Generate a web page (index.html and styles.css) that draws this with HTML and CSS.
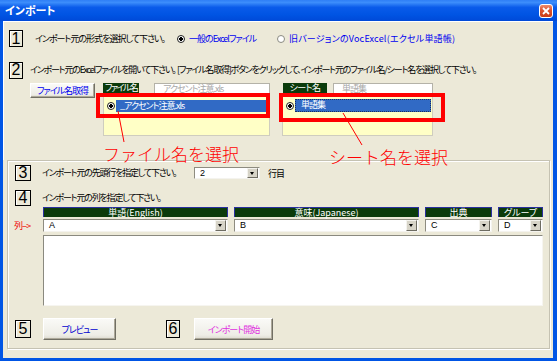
FILE: index.html
```html
<!DOCTYPE html>
<html lang="ja">
<head>
    <meta charset="UTF-8">
    <title>インポート</title>
    <link rel="stylesheet" href="styles.css">
</head>
<body>

    <div class="window">
        <div class="titlebar">
            <span class="title">インポート</span>
            <span class="close">
                <svg width="8" height="8" viewBox="0 0 8 8"><path d="M1 1L7 7M7 1L1 7" stroke="#fff" stroke-width="1.8"/></svg>
            </span>
        </div>

        <div class="client">
            <div class="upper">
                <div class="row">
                    <span class="num">1</span>
                    <span class="prompt p1">インポート元の形式を選択して下さい。</span>
                    <span class="option opt1"><span class="radio on"></span>一般のExcelファイル</span>
                    <span class="option opt2"><span class="radio"></span>旧バージョンのVocExcel(エクセル単語帳)</span>
                </div>

                <div class="row row2">
                    <span class="num">2</span>
                    <span class="prompt p2">インポート元のExcelファイルを開いて下さい。&nbsp;&nbsp;[ファイル名取得]ボタンをクリックして、インポート元のファイル名/シート名を選択して下さい。</span>
                </div>

                <div class="files">
                    <button class="btn btn-get">ファイル名取得</button>

                    <div class="file-group">
                        <div class="group-head">
                            <span class="tag">ファイル名</span>
                            <span class="field">アクセント注意.xls</span>
                        </div>
                        <div class="list">
                            <div class="item">
                                <span class="radio on"></span>
                                <span class="pick">_アクセント注意.xls</span>
                            </div>
                        </div>
                    </div>

                    <div class="sheet-group">
                        <div class="group-head">
                            <span class="tag tag-sheet">シート名</span>
                            <span class="field field-sheet">単語集</span>
                        </div>
                        <div class="list">
                            <div class="item item-sheet">
                                <span class="radio on"></span>
                                <span class="pick focus">単語集</span>
                            </div>
                        </div>
                    </div>
                </div>
            </div>

            <div class="frame">
                <div class="row">
                    <span class="num n3">3</span>
                    <span class="prompt p3">インポート元の先頭行を指定して下さい。</span>
                    <span class="combo combo-row"><span class="value">2</span><span class="drop"></span></span>
                    <span class="unit">行目</span>
                </div>

                <div class="row row4">
                    <span class="num n3">4</span>
                    <span class="prompt p4">インポート元の列を指定して下さい。</span>
                </div>

                <div class="columns">
                    <span class="head">単語(English)</span>
                    <span class="head">意味(Japanese)</span>
                    <span class="head">出典</span>
                    <span class="head">グループ</span>

                    <span class="col-label">列--&gt;</span>
                    <span class="combo"><span class="value">A</span><span class="drop"></span></span>
                    <span class="combo"><span class="value">B</span><span class="drop"></span></span>
                    <span class="combo"><span class="value">C</span><span class="drop"></span></span>
                    <span class="combo"><span class="value">D</span><span class="drop"></span></span>

                    <div class="preview"></div>
                </div>

                <div class="row actions">
                    <span class="num n5">5</span>
                    <button class="btn btn-preview">プレビュー</button>
                    <span class="num n6">6</span>
                    <button class="btn btn-import">インポート開始</button>
                </div>
            </div>
        </div>

        <!-- annotations drawn over the dialog -->
        <div class="mark mark-file"></div>
        <div class="mark mark-sheet"></div>
        <svg class="leaders" width="557" height="361">
            <line x1="118" y1="111" x2="124" y2="142" stroke="#f00" stroke-width="1"/>
            <line x1="343" y1="113" x2="362" y2="145" stroke="#f00" stroke-width="1"/>
        </svg>
        <div class="note note-file">ファイル名を選択</div>
        <div class="note note-sheet">シート名を選択</div>
    </div>

</body>
</html>
```

FILE: styles.css
```css
* {
    margin: 0;
    padding: 0;
    box-sizing: border-box;
}

body {
    width: 557px;
    height: 361px;
    overflow: hidden;
    font-family: "Noto Sans CJK JP", "Noto Sans", sans-serif;
    font-size: 9px;
    font-feature-settings: "palt";
    letter-spacing: -1px;
    color: #000;
    background: #ECE9D8;
}

.window {
    position: relative;
    width: 557px;
    height: 361px;
    display: flex;
    flex-direction: column;
}

.titlebar {
    height: 21px;
    flex: none;
    display: flex;
    align-items: center;
    justify-content: space-between;
    padding: 0 4px 0 5px;
    background: linear-gradient(#2F7FF6 0%, #3C8DFB 12%, #0A5BEA 35%, #0054E3 70%, #0049D8 100%);
}

.title {
    color: #fff;
    font-weight: bold;
    font-size: 11px;
    letter-spacing: 0;
    line-height: 1;
}

.close {
    width: 14px;
    height: 14px;
    display: flex;
    align-items: center;
    justify-content: center;
    border: 1px solid #fff;
    border-radius: 3px;
    background: linear-gradient(#EC8B6C, #DC5330 45%, #C83B16);
}

.client {
    flex: 1;
    display: flex;
    flex-direction: column;
    background: #ECE9D8;
    border: solid #0055E5;
    border-width: 0 4px 3px 3px;
}

.upper {
    height: 139px;
    flex: none;
    padding: 9px 0 0 6px;
    box-shadow: inset 1px 1px #fff;
}

.row {
    display: flex;
    align-items: center;
}

.num {
    flex: none;
    width: 14px;
    height: 17px;
    display: flex;
    align-items: center;
    justify-content: center;
    border: 1px solid #000;
    font-family: "Liberation Sans", Arial, sans-serif;
    font-size: 16px;
    letter-spacing: 0;
    line-height: 1;
    box-shadow: inset 1px 1px #fff;
}

.prompt {
    flex: none;
    white-space: nowrap;
    line-height: 12px;
}

.p1 {
    margin-left: 12px;
    width: 142px;
}

.option {
    display: flex;
    align-items: center;
    color: #0000F0;
    white-space: nowrap;
}

.opt1 {
    width: 100px;
}

.opt2 {
    letter-spacing: 0.2px;
}

.radio {
    flex: none;
    width: 8px;
    height: 8px;
    margin-right: 4px;
    border-radius: 50%;
    border: 1px solid #8A8A80;
    background: #fff;
}

.radio.on {
    border-color: #222;
    background: radial-gradient(circle, #000 0 1.6px, #fff 2px);
}

.row2 {
    margin-top: 15px;
    height: 16px;
}

.p2 {
    margin-left: 7px;
    letter-spacing: -1.2px;
}

.files {
    display: flex;
    align-items: flex-start;
    margin-top: 5px;
    padding-left: 21px;
}

.btn {
    flex: none;
    font-family: inherit;
    font-size: 9px;
    font-feature-settings: "palt";
    letter-spacing: -1px;
    background: linear-gradient(#FAFAF7, #EEEDE6 80%, #DDDACF);
    border: 1px solid;
    border-color: #fff #716F64 #716F64 #fff;
    box-shadow: inset -1px -1px #ACA899;
    cursor: pointer;
}

.btn-get {
    width: 65px;
    height: 15px;
    color: #0000F0;
    line-height: 11px;
}

.file-group {
    margin-left: 8px;
    width: 167px;
}

.sheet-group {
    margin-left: 12px;
    width: 151px;
}

.group-head {
    display: flex;
    justify-content: space-between;
    align-items: flex-start;
    height: 11px;
}

.tag {
    width: 36px;
    height: 10px;
    background: #0B3B0B;
    color: #fff;
    text-align: center;
    white-space: nowrap;
    letter-spacing: -1.6px;
    line-height: 10px;
}

.tag-sheet {
    width: 44px;
    margin-left: 1px;
    letter-spacing: -0.6px;
}

.field {
    width: 116px;
    height: 11px;
    padding-left: 8px;
    background: #fff;
    border: 1px solid #B4B2A8;
    color: #A8A8A8;
    white-space: nowrap;
    line-height: 9px;
}

.field-sheet {
    width: 100px;
}

.list {
    height: 42px;
    padding: 5px 1px 0 3px;
    background: #FFFFC6;
    border: 1px solid #CFCDBF;
}

.item {
    display: flex;
    align-items: center;
    height: 12px;
}

.item .radio {
    margin-right: 1px;
}

.item-sheet {
    margin-top: -1px;
    height: 13px;
}

.pick {
    flex: 1;
    height: 100%;
    padding-left: 4px;
    background: #316AC5;
    color: #fff;
    white-space: nowrap;
    line-height: 12px;
}

.pick.focus {
    padding-left: 6px;
    outline: 1px dotted #1A2E60;
    outline-offset: -1px;
}

.frame {
    flex: none;
    height: 189px;
    width: 543px;
    margin-left: 4px;
    padding: 4px 0 0 7px;
    border: 1px solid #C5C2B2;
    box-shadow: inset 1px 1px #fff, 1px 1px #fff;
}

.frame .num {
    width: 16px;
    height: 16px;
}

.p3 {
    margin-left: 11px;
    width: 152px;
    letter-spacing: -1.2px;
}

.p4 {
    margin-left: 11px;
    letter-spacing: -1.2px;
}

.row4 {
    margin-top: 9px;
}

.combo {
    display: flex;
    align-items: stretch;
    height: 13px;
    background: #fff;
    border: 1px solid;
    border-color: #8E8C80 #F4F3EE #F4F3EE #8E8C80;
}

.combo-row {
    width: 66px;
    height: 12px;
}

.value {
    flex: 1;
    padding-left: 5px;
    line-height: 11px;
    font-family: "Liberation Sans", Arial, sans-serif;
    font-size: 9px;
    letter-spacing: 0;
}

.drop {
    flex: none;
    width: 11px;
    margin: 0 1px 0 0;
    position: relative;
    background: #D7D4C8;
    border: 1px solid;
    border-color: #F4F3EE #6E6C62 #6E6C62 #F4F3EE;
}

.drop::after {
    content: "";
    position: absolute;
    left: 2px;
    top: 3px;
    border-style: solid;
    border-width: 3px 2.5px 0 2.5px;
    border-color: #000 transparent transparent transparent;
}

.unit {
    margin-left: 8px;
}

.columns {
    display: grid;
    grid-template-columns: 22px 185px 185px 67px 45px;
    grid-template-rows: 10px 13px 72px;
    column-gap: 6px;
    row-gap: 2px;
    margin-top: 1px;
}

.head {
    height: 10px;
    background: #0B3B0B;
    border: 1px solid #2A2FA0;
    border-bottom: none;
    color: #fff;
    text-align: center;
    white-space: nowrap;
    letter-spacing: 0;
    line-height: 9px;
}

.head:first-child {
    grid-column: 2;
}

.col-label {
    margin-left: -1px;
    color: #F00000;
    white-space: nowrap;
    line-height: 13px;
}

.preview {
    grid-column: 2 / -1;
    margin-top: 1px;
    background: #fff;
    border: 1px solid;
    border-color: #8A897F #F6F5F0 #F6F5F0 #8A897F;
}

.actions {
    margin-top: 12px;
}

.actions .num {
    height: 18px;
}

.btn-preview {
    margin-left: 12px;
    width: 73px;
    height: 22px;
    color: #0000D0;
}

.frame .n6 {
    width: 14px;
    margin-left: 50px;
}

.btn-import {
    margin-left: 14px;
    width: 79px;
    height: 22px;
    color: #E030E0;
}

.mark {
    position: absolute;
    border: 4px solid #F00;
}

.mark-file {
    left: 96px;
    top: 93px;
    width: 174px;
    height: 25px;
}

.mark-sheet {
    left: 279px;
    top: 93px;
    width: 166px;
    height: 29px;
}

.leaders {
    position: absolute;
    left: 0;
    top: 0;
    pointer-events: none;
}

.note {
    position: absolute;
    color: #F00;
    font-size: 17px;
    font-weight: 300;
    font-feature-settings: normal;
    letter-spacing: 0;
    line-height: 1;
    white-space: nowrap;
}

.note-file {
    left: 103px;
    top: 145px;
}

.note-sheet {
    left: 329px;
    top: 148px;
}
```
